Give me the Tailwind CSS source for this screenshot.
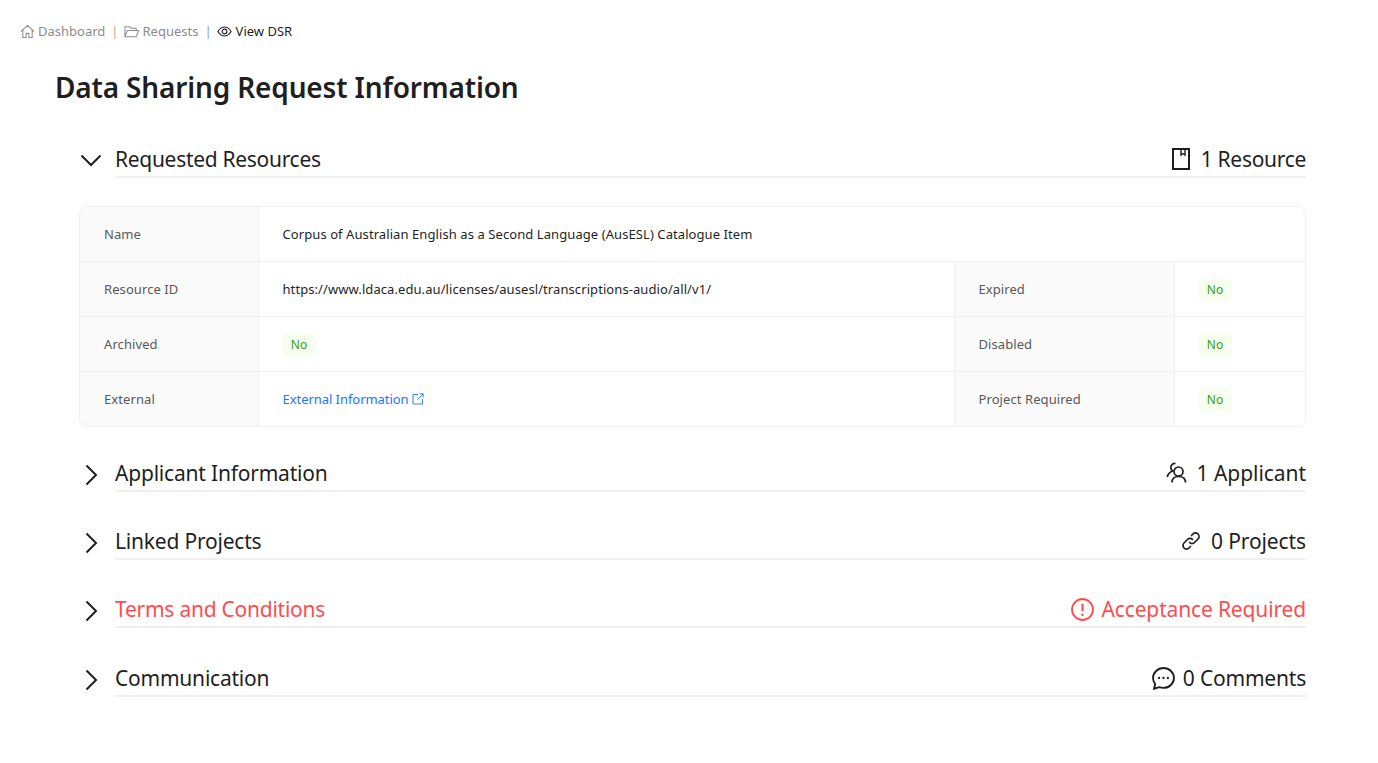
<!DOCTYPE html>
<html lang="en">
<head>
  <meta charset="UTF-8">
  <title>View DSR</title>
  <script src="https://cdn.jsdelivr.net/npm/@tailwindcss/browser@4"></script>
</head>
<body class="bg-white font-['Noto_Sans',sans-serif] text-[#1f1f1f] h-[763px] overflow-hidden">

  <!-- breadcrumb -->
  <nav class="flex items-center h-[22px] mt-[20px] ml-[20px] text-[13px] leading-[22px]">
    <a class="flex items-center text-[#8c8c8c]">
      <svg class="w-[15px] h-[15px] mr-[3px]" viewBox="0 0 16 16" fill="none" stroke="currentColor" stroke-width="1.1"><path d="M1 8 8 1.500 15 8M3 6.500V14.500H6.500V10H9.500V14.500H13V6.500"/></svg>
      Dashboard
    </a>
    <span class="mx-[6px] text-[#c9a58a]">|</span>
    <a class="flex items-center text-[#8c8c8c]">
      <svg class="w-[15px] h-[15px] mr-[3px]" viewBox="0 0 16 16" fill="none" stroke="currentColor" stroke-width="1.1"><path d="M1 13.500V3H6L7.500 4.500H13V7M1 13.500H13L15.500 7H3.500L1 13.500Z"/></svg>
      Requests
    </a>
    <span class="ml-[6px] mr-[5px] text-[#8aa5c9]">|</span>
    <span class="flex items-center text-[#1f1f1f]">
      <svg class="w-[15px] h-[15px] mr-[4px]" viewBox="0 0 16 16" fill="none" stroke="currentColor" stroke-width="1.2"><path d="M1 8C3 4.500 5.300 3.200 8 3.200S13 4.500 15 8C13 11.500 10.700 12.800 8 12.800S3 11.500 1 8Z"/><circle cx="8" cy="8" r="2.500"/></svg>
      View DSR
    </span>
  </nav>

  <main class="pl-[55px] pr-[72px]">
    <h1 class="mt-[22px] text-[28px] tracking-[-0.16px] leading-[46px] font-semibold text-[#1f1f1f]">Data Sharing Request Information</h1>

    <div class="ml-[24px] mt-[32px]">
      <!-- Requested Resources -->
      <section>
        <div class="flex items-center h-[36px]">
          <svg class="w-[24px] h-[24px] mr-[12px] text-[#1f1f1f]" viewBox="0 0 24 24" fill="none" stroke="currentColor" stroke-width="2"><path d="M2.500 7.500 12 17 21.500 7.500"/></svg>
          <div class="flex-1 flex justify-between items-center border-b-2 border-[#f0f0f0] h-[36px] text-[21px] tracking-[-0.3px] leading-[32px]">
            <span>Requested Resources</span>
            <span class="flex items-center">
              <svg class="w-[20px] h-[24px] mr-[10px]" viewBox="0 0 20 24" fill="none" stroke="#1f1f1f" stroke-width="2"><path d="M2 2H18V22H2Z"/><path stroke-width="1.400" d="M10 2V8L12 6.500 14 8V2"/></svg>
              1 Resource
            </span>
          </div>
        </div>

        <div class="mt-[28px] border border-[#f0f0f0] rounded-[8px] overflow-hidden text-[13px] tracking-[0.08px]">
          <table class="w-full table-fixed border-collapse">
            <colgroup>
              <col class="w-[178px]"><col><col class="w-[220px]"><col class="w-[131px]">
            </colgroup>
            <tbody>
              <tr class="h-[54px] border-b border-[#f0f0f0]">
                <th class="bg-[#fafafa] border-r border-[#f0f0f0] pl-[24px] pt-[2px] text-left font-normal text-[#595959]">Name</th>
                <td colspan="3" class="pl-[24px] pt-[2px]">Corpus of Australian English as a Second Language (AusESL) Catalogue Item</td>
              </tr>
              <tr class="h-[55px] border-b border-[#f0f0f0]">
                <th class="bg-[#fafafa] border-r border-[#f0f0f0] pl-[24px] pt-[2px] text-left font-normal text-[#595959]">Resource ID</th>
                <td class="pl-[24px] pt-[2px] border-r border-[#f0f0f0]">https://www.ldaca.edu.au/licenses/ausesl/transcriptions-audio/all/v1/</td>
                <th class="bg-[#fafafa] border-r border-[#f0f0f0] pl-[24px] pt-[2px] text-left font-normal text-[#595959]">Expired</th>
                <td class="pl-[24px] pt-[2px]"><span class="inline-block w-[33px] h-[22px] leading-[22px] text-center text-[12px] rounded-[4px] bg-[#f6ffed] text-[#389e0d]">No</span></td>
              </tr>
              <tr class="h-[55px] border-b border-[#f0f0f0]">
                <th class="bg-[#fafafa] border-r border-[#f0f0f0] pl-[24px] pt-[2px] text-left font-normal text-[#595959]">Archived</th>
                <td class="pl-[24px] pt-[2px] border-r border-[#f0f0f0]"><span class="inline-block w-[33px] h-[22px] leading-[22px] text-center text-[12px] rounded-[4px] bg-[#f6ffed] text-[#389e0d]">No</span></td>
                <th class="bg-[#fafafa] border-r border-[#f0f0f0] pl-[24px] pt-[2px] text-left font-normal text-[#595959]">Disabled</th>
                <td class="pl-[24px] pt-[2px]"><span class="inline-block w-[33px] h-[22px] leading-[22px] text-center text-[12px] rounded-[4px] bg-[#f6ffed] text-[#389e0d]">No</span></td>
              </tr>
              <tr class="h-[55px]">
                <th class="bg-[#fafafa] border-r border-[#f0f0f0] pl-[24px] pt-[2px] text-left font-normal text-[#595959]">External</th>
                <td class="pl-[24px] pt-[2px] border-r border-[#f0f0f0]">
                  <a class="inline-flex items-center text-[#1677ff] tracking-[-0.05px]">External Information
                    <svg class="w-[12px] h-[12px] ml-[3px] mb-[2px]" viewBox="0 0 12 12" fill="none" stroke="currentColor" stroke-width="0.900"><path d="M6 1.500H1V11H10.500V6M5.500 6.500 11 1M7.500 .8H11.200V4.500"/></svg>
                  </a>
                </td>
                <th class="bg-[#fafafa] border-r border-[#f0f0f0] pl-[24px] pt-[2px] text-left font-normal text-[#595959]">Project Required</th>
                <td class="pl-[24px] pt-[2px]"><span class="inline-block w-[33px] h-[22px] leading-[22px] text-center text-[12px] rounded-[4px] bg-[#f6ffed] text-[#389e0d]">No</span></td>
              </tr>
            </tbody>
          </table>
        </div>
      </section>

      <!-- collapsed sections -->
      <section class="flex items-center h-[36px] mt-[29px]">
        <svg class="w-[24px] h-[24px] mr-[12px]" viewBox="0 0 24 24" fill="none" stroke="#1f1f1f" stroke-width="2"><path d="M7.500 3.500 17 13 7.500 22.500"/></svg>
        <div class="flex-1 flex justify-between items-center border-b-2 border-[#f0f0f0] h-[36px] text-[21px] tracking-[-0.2px] leading-[32px]">
          <span>Applicant Information</span>
          <span class="flex items-center tracking-[-0.05px]">
            <svg class="w-[22px] h-[22px] mr-[9px]" viewBox="0 0 22 22" fill="none" stroke="#1f1f1f" stroke-width="1.700"><circle cx="12.500" cy="9.500" r="4.500"/><path d="M6 20.500C6 16.500 8.500 14.500 12.500 14.500S19.500 16.500 19.500 20.500M9.500 1.500C6.500 1.200 4.800 3.200 4.800 5.500C4.800 7 5.500 8.200 6.500 9C4 10 1.800 12 1.200 15"/></svg>
            1 Applicant
          </span>
        </div>
      </section>

      <section class="flex items-center h-[36px] mt-[32px]">
        <svg class="w-[24px] h-[24px] mr-[12px]" viewBox="0 0 24 24" fill="none" stroke="#1f1f1f" stroke-width="2"><path d="M7.500 3.500 17 13 7.500 22.500"/></svg>
        <div class="flex-1 flex justify-between items-center border-b-2 border-[#f0f0f0] h-[36px] text-[21px] tracking-[-0.2px] leading-[32px]">
          <span>Linked Projects</span>
          <span class="flex items-center tracking-[-0.1px]">
            <svg class="w-[20px] h-[20px] mr-[10px]" viewBox="0 0 20 20" fill="none" stroke="#1f1f1f" stroke-width="1.700" stroke-linecap="round"><path d="M8.500 11.500a3.500 3.500 0 0 0 5 0l3.500-3.500a3.500 3.500 0 0 0-5-5L10.500 4.500"/><path d="M11.500 8.500a3.500 3.500 0 0 0-5 0L3 12a3.500 3.500 0 0 0 5 5l1.500-1.500"/></svg>
            0 Projects
          </span>
        </div>
      </section>

      <section class="flex items-center h-[36px] mt-[32px]">
        <svg class="w-[24px] h-[24px] mr-[12px]" viewBox="0 0 24 24" fill="none" stroke="#1f1f1f" stroke-width="2"><path d="M7.500 3.500 17 13 7.500 22.500"/></svg>
        <div class="flex-1 flex justify-between items-center border-b-2 border-[#f0f0f0] h-[36px] text-[21px] tracking-[-0.25px] leading-[32px] text-[#ff4d4f]">
          <span>Terms and Conditions</span>
          <span class="flex items-center tracking-[-0.15px]">
            <svg class="w-[23px] h-[23px] mr-[8px]" viewBox="0 0 22 22" fill="none" stroke="currentColor" stroke-width="1.800"><circle cx="11" cy="11" r="10"/><path stroke-width="2" d="M11 5.500V12.500"/><circle cx="11" cy="16" r="1.200" fill="currentColor" stroke="none"/></svg>
            Acceptance Required
          </span>
        </div>
      </section>

      <section class="flex items-center h-[36px] mt-[33px]">
        <svg class="w-[24px] h-[24px] mr-[12px]" viewBox="0 0 24 24" fill="none" stroke="#1f1f1f" stroke-width="2"><path d="M7.500 3.500 17 13 7.500 22.500"/></svg>
        <div class="flex-1 flex justify-between items-center border-b-2 border-[#f0f0f0] h-[36px] text-[21px] tracking-[-0.22px] leading-[32px]">
          <span>Communication</span>
          <span class="flex items-center tracking-[-0.2px]">
            <svg class="w-[23px] h-[23px] mr-[8px]" viewBox="0 0 22 22" fill="none" stroke="#1f1f1f" stroke-width="1.800"><path d="M11 1C5.500 1 1 5.300 1 10.500C1 12.700 1.800 14.700 3 16.300L2 20.800L7 19.300C8.200 19.800 9.600 20 11 20C16.500 20 21 15.700 21 10.500S16.500 1 11 1Z"/><circle cx="6.800" cy="10.500" r="1.100" fill="#1f1f1f" stroke="none"/><circle cx="11" cy="10.500" r="1.100" fill="#1f1f1f" stroke="none"/><circle cx="15.200" cy="10.500" r="1.100" fill="#1f1f1f" stroke="none"/></svg>
            0 Comments
          </span>
        </div>
      </section>
    </div>
  </main>

</body>
</html>
